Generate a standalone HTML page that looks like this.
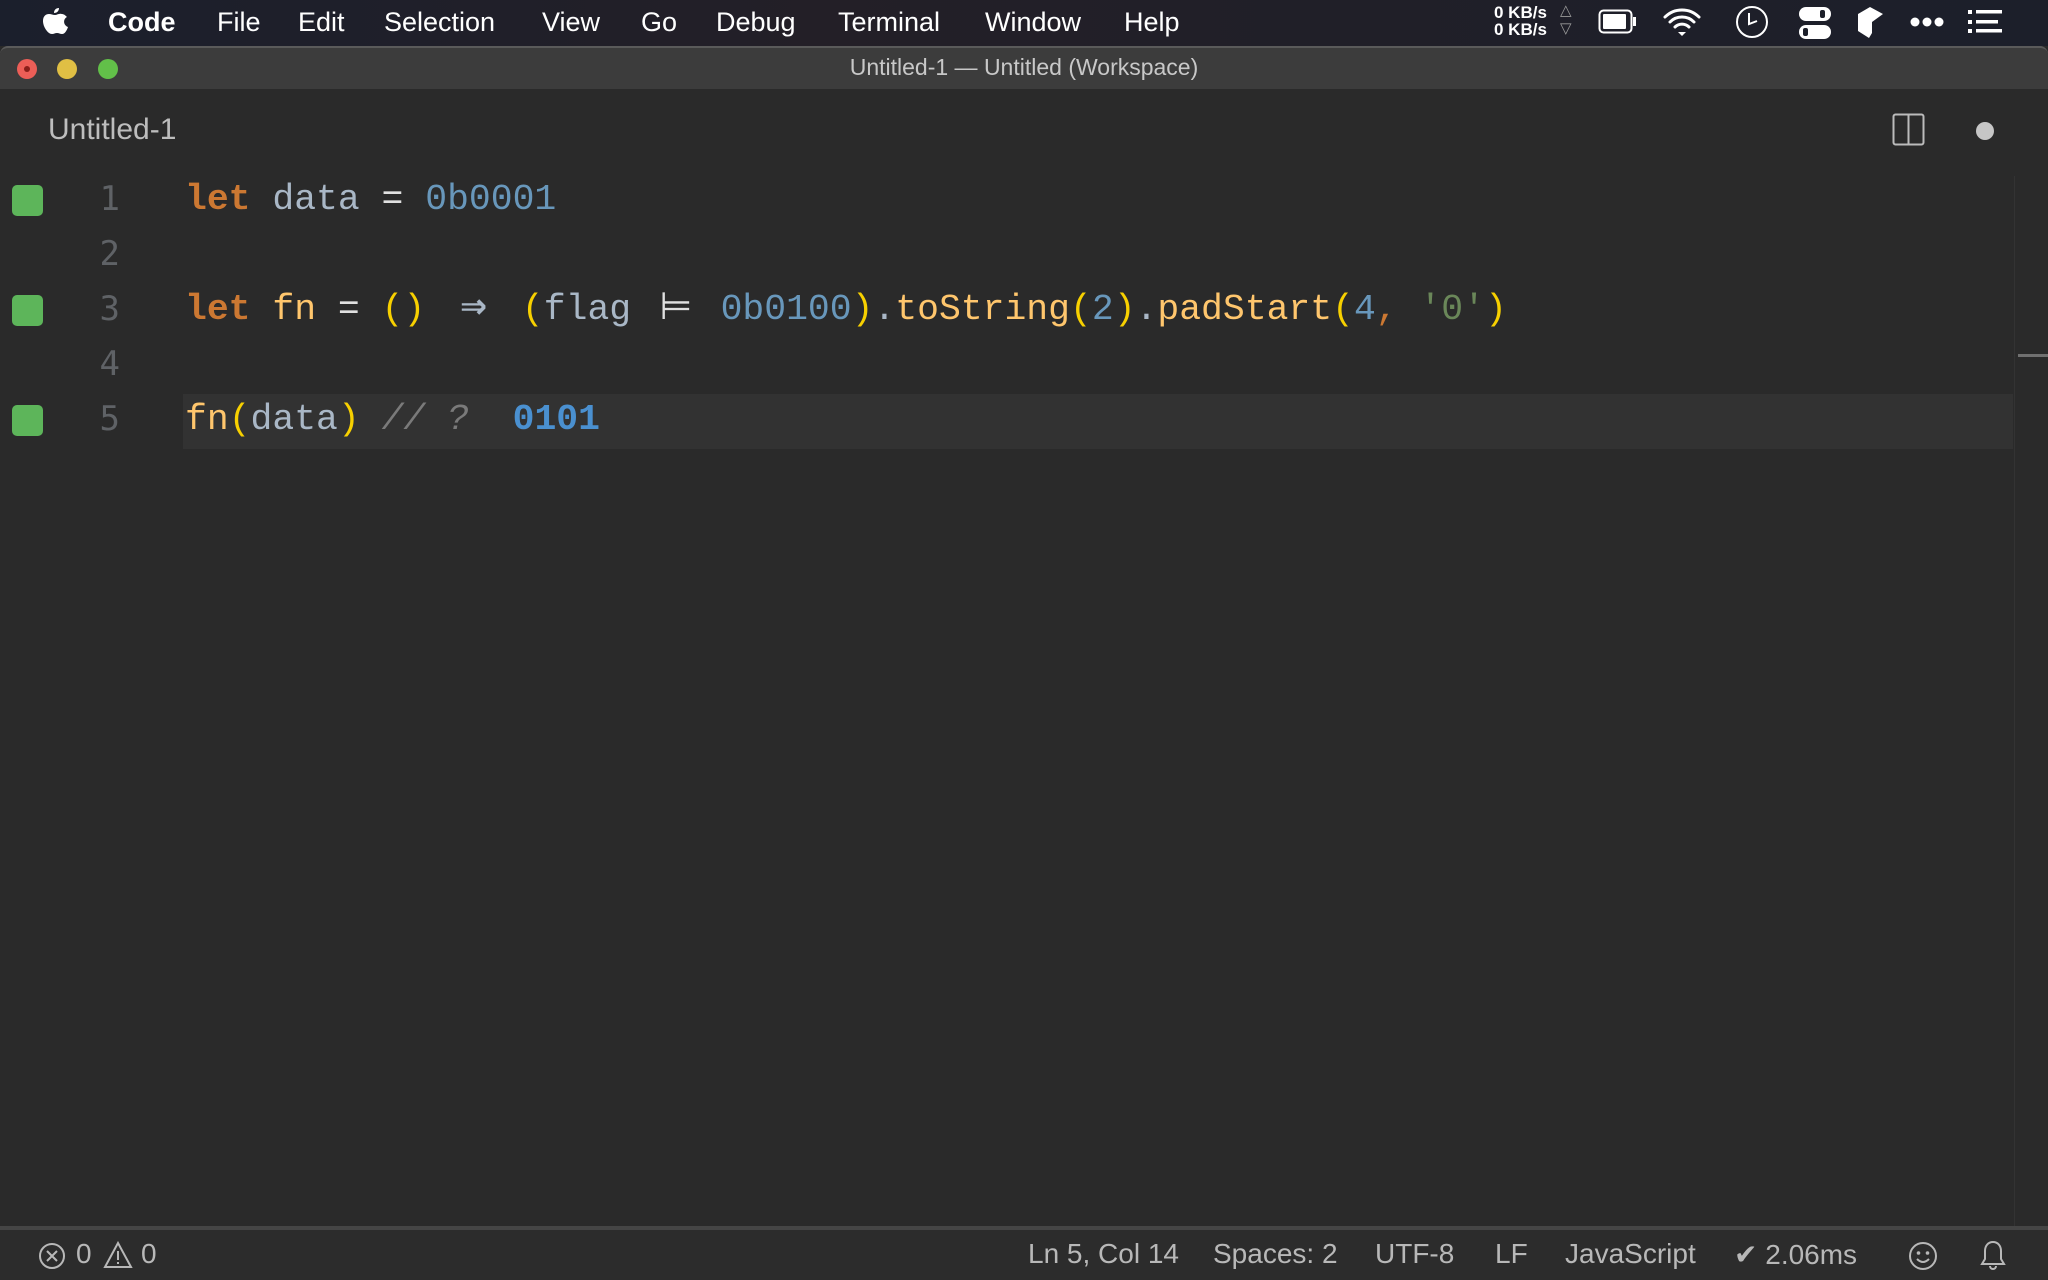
<!DOCTYPE html>
<html><head><meta charset="utf-8"><style>
*{margin:0;padding:0;box-sizing:border-box}
body{width:2048px;height:1280px;background:#2a2a2a;overflow:hidden;position:relative;font-family:"Liberation Sans",sans-serif}
.menubar{position:absolute;left:0;top:0;width:2048px;height:46px;background:linear-gradient(90deg,#1b1f2c,#231f27 40%,#1c1f2a);color:#fff;font-size:27px}
.menubar span{position:absolute;top:7px}
.titlebar{position:absolute;left:0;top:46px;width:2048px;height:43px;background:#3c3c3c;border-top:2px solid #5a5a5a;border-radius:8px 8px 0 0}
.tl{position:absolute;top:11px;width:20px;height:20px;border-radius:50%}
.title{position:absolute;left:0;right:0;top:6px;text-align:center;color:#c8c8c8;font-size:23px}
.tabrow{position:absolute;left:0;top:89px;width:2048px;height:87px;background:#2a2a2a}
.code{position:absolute;left:185px;font-family:"Liberation Mono","DejaVu Sans Mono",monospace;font-size:36.4px;line-height:55px;white-space:pre;color:#a9b7c6}
.lig{display:inline-block;width:2ch;text-align:center;font-family:"DejaVu Sans Mono",monospace;font-size:44px;line-height:40px}
.ln{position:absolute;left:60px;width:60px;text-align:right;font-family:"DejaVu Sans Mono",monospace;font-size:34px;color:#5f6266;line-height:55px}
.sq{position:absolute;left:12px;width:31px;height:31px;background:#5db55a;border-radius:5px}
.k{color:#cc7832;font-weight:bold}.n{color:#6897bb}.f{color:#ffc66d}.p{color:#f7d000}.s{color:#6a8759}.c{color:#7a7a7a;font-style:italic}.r{color:#4a90d0;font-weight:bold}.w{color:#e0e0e0}
.status{position:absolute;left:0;top:1226px;width:2048px;height:54px;background:#2c2c2c;border-top:4px solid #454545;color:#b8b8b8;font-size:28px}
.status span{position:absolute;top:8px}
</style></head><body>
<div class="menubar">
<svg style="position:absolute;left:42px;top:6px" width="26" height="30" viewBox="0 0 26 30"><path d="M17 2c0 3-2 5-5 5 0-3 2-5 5-5zM13 9c2 0 4-2 7-1 2 0 4 2 5 3-4 2-4 8 1 10-1 3-3 7-6 7-2 0-3-1-5-1s-3 1-5 1C6 28 1 21 1 15c0-5 3-7 6-7 2 0 4 1 6 1z" fill="#fff"/></svg>
<span style="left:108px;font-weight:bold">Code</span>
<span style="left:217px">File</span>
<span style="left:298px">Edit</span>
<span style="left:384px">Selection</span>
<span style="left:542px">View</span>
<span style="left:641px">Go</span>
<span style="left:716px">Debug</span>
<span style="left:838px">Terminal</span>
<span style="left:985px">Window</span>
<span style="left:1124px">Help</span>
<div style="position:absolute;left:1494px;top:4px;font-size:17px;line-height:17px;font-weight:bold">0 KB/s<br>0 KB/s</div>
<div style="position:absolute;left:1560px;top:2px;font-size:15px;line-height:18px;color:#999">△<br>▽</div>
<svg style="position:absolute;left:1598px;top:9px" width="40" height="26"><rect x="1.5" y="1.5" width="32" height="22" rx="4" fill="none" stroke="#fff" stroke-width="2"/><rect x="5" y="5" width="23" height="15" rx="1" fill="#fff"/><rect x="35" y="8" width="3" height="9" fill="#fff"/></svg>
<svg style="position:absolute;left:1662px;top:6px" width="40" height="32" viewBox="0 0 40 32"><path d="M3 11a24 24 0 0 1 34 0M8 16a17 17 0 0 1 24 0M13 21a10 10 0 0 1 14 0" fill="none" stroke="#fff" stroke-width="3" stroke-linecap="round"/><path d="M16 26l4 4 4-4z" fill="#fff"/></svg>
<svg style="position:absolute;left:1734px;top:4px" width="36" height="36"><circle cx="18" cy="18" r="15" fill="none" stroke="#fff" stroke-width="2"/><path d="M15 9v11l8-3" fill="none" stroke="#fff" stroke-width="2"/></svg>
<svg style="position:absolute;left:1798px;top:6px" width="34" height="34"><rect x="1" y="1" width="32" height="14" rx="7" fill="#fff"/><rect x="1" y="19" width="32" height="14" rx="7" fill="#fff"/><rect x="22" y="4" width="5" height="8" rx="2" fill="#1c1f2a"/><rect x="5" y="22" width="5" height="8" rx="2" fill="#1c1f2a"/></svg>
<svg style="position:absolute;left:1856px;top:6px" width="30" height="34"><path d="M2 8l12-7 13 7-11 8v11l-3 5-11-7z" fill="#fff"/></svg>
<svg style="position:absolute;left:1910px;top:16px" width="34" height="12"><circle cx="5" cy="6" r="4.5" fill="#fff"/><circle cx="17" cy="6" r="4.5" fill="#fff"/><circle cx="29" cy="6" r="4.5" fill="#fff"/></svg>
<svg style="position:absolute;left:1968px;top:10px" width="34" height="24"><rect x="0" y="0" width="4" height="4" fill="#fff"/><rect x="8" y="0" width="26" height="3.5" fill="#fff"/><rect x="0" y="10" width="4" height="4" fill="#fff"/><rect x="8" y="10" width="22" height="3.5" fill="#fff"/><rect x="0" y="19" width="4" height="4" fill="#fff"/><rect x="8" y="19" width="26" height="3.5" fill="#fff"/></svg>
</div>
<div class="titlebar">
<div class="tl" style="left:17px;background:#ec5e57"><div style="position:absolute;left:7px;top:7px;width:6px;height:6px;border-radius:50%;background:#8a1f1a"></div></div>
<div class="tl" style="left:57px;background:#e0bf44"></div>
<div class="tl" style="left:98px;background:#62c049"></div>
<div class="title">Untitled-1 — Untitled (Workspace)</div>
</div>
<div class="tabrow">
<div style="position:absolute;left:48px;top:24px;color:#bdbdbd;font-size:30px">Untitled-1</div>
<svg style="position:absolute;left:1892px;top:24px" width="34" height="34"><rect x="1.5" y="1.5" width="30" height="30" rx="2" fill="none" stroke="#bbb" stroke-width="2"/><line x1="16.5" y1="1.5" x2="16.5" y2="31.5" stroke="#bbb" stroke-width="2"/></svg>
<div style="position:absolute;left:1976px;top:33px;width:18px;height:18px;border-radius:50%;background:#c6c6c6"></div>
</div>
<div style="position:absolute;left:183px;top:394px;width:1830px;height:55px;background:#323232"></div>
<div style="position:absolute;left:2014px;top:176px;width:34px;height:1050px;border-left:1px solid #333"></div>
<div style="position:absolute;left:2018px;top:354px;width:30px;height:3px;background:#707070"></div>
<div class="sq" style="top:185px"></div><div class="sq" style="top:295px"></div><div class="sq" style="top:405px"></div>
<div class="ln" style="top:172px">1<br>2<br>3<br>4<br>5</div>
<div class="code" style="top:172px"><span class="k">let</span> data <span class="w">=</span> <span class="n">0b0001</span>

<span class="k">let</span> <span class="f">fn</span> <span class="w">=</span> <span class="p">()</span> <span class="lig" style="color:#a9b7c6;font-weight:bold">⇒</span> <span class="p">(</span>flag <span class="lig w" style="font-size:38px">⊨</span> <span class="n">0b0100</span><span class="p">)</span>.<span class="f">toString</span><span class="p">(</span><span class="n">2</span><span class="p">)</span>.<span class="f">padStart</span><span class="p">(</span><span class="n">4</span><span class="k" style="font-weight:normal">,</span> <span class="s">'0'</span><span class="p">)</span>

<span class="f">fn</span><span class="p">(</span>data<span class="p">)</span> <span class="c">// ?</span>  <span class="r">0101</span></div>
<div class="status">
<svg style="position:absolute;left:38px;top:12px" width="28" height="28"><circle cx="14" cy="14" r="12" fill="none" stroke="#b8b8b8" stroke-width="2"/><path d="M9 9l10 10M19 9l-10 10" stroke="#b8b8b8" stroke-width="2"/></svg>
<span style="left:76px">0</span>
<svg style="position:absolute;left:103px;top:11px" width="30" height="28"><path d="M15 2l13 24H2z" fill="none" stroke="#b8b8b8" stroke-width="2"/><path d="M15 10v9M15 21v2" stroke="#b8b8b8" stroke-width="2"/></svg>
<span style="left:141px">0</span>
<span style="left:1028px">Ln 5, Col 14</span>
<span style="left:1213px">Spaces: 2</span>
<span style="left:1375px">UTF-8</span>
<span style="left:1495px">LF</span>
<span style="left:1565px">JavaScript</span>
<span style="left:1734px">✔ 2.06ms</span>
<svg style="position:absolute;left:1908px;top:11px" width="30" height="30"><circle cx="15" cy="15" r="13" fill="none" stroke="#b8b8b8" stroke-width="2"/><circle cx="10.5" cy="12" r="1.8" fill="#b8b8b8"/><circle cx="19.5" cy="12" r="1.8" fill="#b8b8b8"/><path d="M9 18q6 6 12 0" fill="none" stroke="#b8b8b8" stroke-width="2"/></svg>
<svg style="position:absolute;left:1980px;top:10px" width="26" height="32"><path d="M13 2c-5 0-8 4-8 9v8l-3 5h22l-3-5v-8c0-5-3-9-8-9zM10 26a3 3 0 0 0 6 0" fill="none" stroke="#b8b8b8" stroke-width="2"/></svg>
</div>
</body></html>
